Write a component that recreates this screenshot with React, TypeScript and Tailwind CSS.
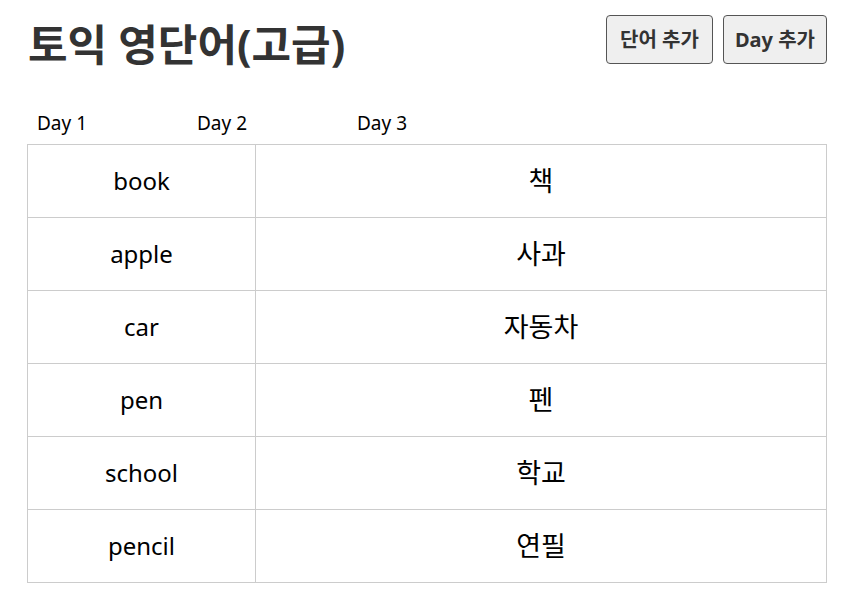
const days = [1, 2, 3];

const words = [
  { eng: "book", kor: "책" },
  { eng: "apple", kor: "사과" },
  { eng: "car", kor: "자동차" },
  { eng: "pen", kor: "펜" },
  { eng: "school", kor: "학교" },
  { eng: "pencil", kor: "연필" },
];

export default function App() {
  return (
    <div className="min-h-screen bg-white font-['Noto_Sans','Noto_Sans_CJK_KR',sans-serif]">
      <div className="w-[800px] ml-[27px]">
        <header className="flex justify-between items-start">
          <h1 className="mt-[16px] ml-[1px] text-[43px] leading-[58px] font-bold text-[#333]">
            토익 영단어(고급)
          </h1>
          <div className="flex gap-[10px] mt-[15px]">
            <button className="w-[107px] h-[49px] border border-[#555] rounded-[4px] bg-[#efefef] text-[20px] font-bold text-[#333]">
              단어 추가
            </button>
            <button className="w-[104px] h-[49px] border border-[#555] rounded-[4px] bg-[#efefef] text-[20px] font-bold text-[#333]">
              Day 추가
            </button>
          </div>
        </header>

        <nav className="flex mt-[36px] h-[34px]">
          {days.map((d) => (
            <a key={d} href="#" className="w-[160px] pl-[10px] text-[19px] leading-[26px] text-black">
              Day {d}
            </a>
          ))}
        </nav>

        <table className="w-full border-collapse border border-[#ccc]">
          <tbody>
            {words.map((w) => (
              <tr key={w.eng} className="h-[73px]">
                <td className="w-[228px] border border-[#ccc] text-center text-[24px] text-black">
                  {w.eng}
                </td>
                <td className="border border-[#ccc] text-center text-[27px] text-black">
                  {w.kor}
                </td>
              </tr>
            ))}
          </tbody>
        </table>
      </div>
    </div>
  );
}
